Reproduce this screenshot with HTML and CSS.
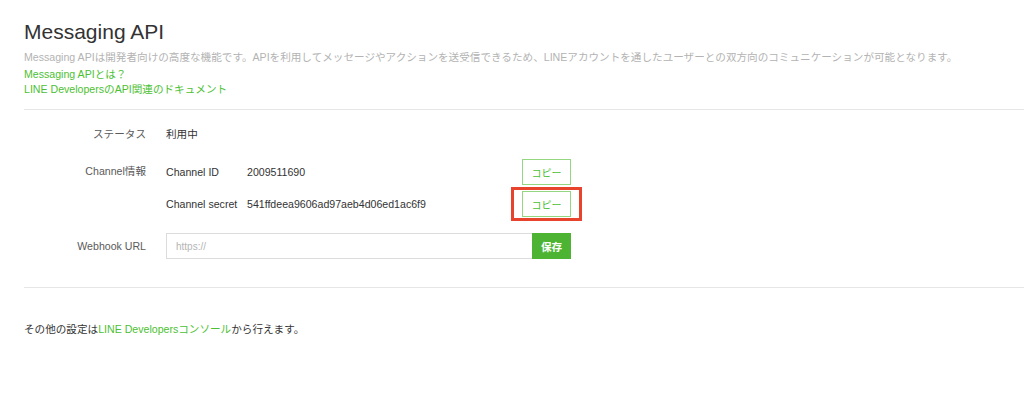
FILE: index.html
```html
<!DOCTYPE html>
<html lang="ja">
<head>
<meta charset="utf-8">
<title>Messaging API</title>
<link rel="stylesheet" href="styles.css">
</head>
<body>
<div class="page">
  <header class="head">
    <h1 class="title">Messaging API</h1>
    <p class="desc">Messaging APIは開発者向けの高度な機能です。APIを利用してメッセージやアクションを送受信できるため、LINEアカウントを通したユーザーとの双方向のコミュニケーションが可能となります。</p>
    <a class="link link-first" href="#">Messaging APIとは？</a>
    <a class="link" href="#">LINE DevelopersのAPI関連のドキュメント</a>
  </header>
  <hr class="divider">
  <section class="form">
    <div class="row row-status">
      <div class="label">ステータス</div>
      <div class="value">利用中</div>
    </div>
    <div class="row row-channel">
      <div class="label label-top">Channel情報</div>
      <div class="channel">
        <div class="ch-row">
          <span class="ch-key">Channel ID</span>
          <span class="ch-val">2009511690</span>
          <button class="copy">コピー</button>
        </div>
        <div class="ch-row">
          <span class="ch-key">Channel secret</span>
          <span class="ch-val">541ffdeea9606ad97aeb4d06ed1ac6f9</span>
          <span class="highlight"><button class="copy">コピー</button></span>
        </div>
      </div>
    </div>
    <div class="row row-webhook">
      <div class="label">Webhook URL</div>
      <div class="webhook">
        <input class="url" type="text" placeholder="https://">
        <button class="save">保存</button>
      </div>
    </div>
  </section>
  <hr class="divider divider-2">
  <p class="footer">その他の設定は<a class="link-inline" href="#">LINE Developersコンソール</a>から行えます。</p>
</div>
</body>
</html>
```

FILE: styles.css
```css
* { box-sizing: border-box; }
html, body { margin: 0; padding: 0; background: #fff; }
body {
  font-family: "Liberation Sans", "Noto Sans CJK JP", sans-serif;
  color: #333;
  font-size: 11px;
}
.page { padding: 18px 0 0 24px; }

.head { display: flex; flex-direction: column; align-items: flex-start; }
.title {
  margin: 0;
  font-size: 21px;
  font-weight: 400;
  line-height: 28px;
  color: #333;
}
.desc {
  margin: 4px 0 0;
  font-size: 10.6px;
  line-height: 15px;
  color: #b3b3b3;
  white-space: nowrap;
}
.link {
  font-size: 10.6px;
  line-height: 15px;
  color: #4cbf33;
  text-decoration: none;
}
.link-first { margin-top: 2px; }

.divider {
  margin: 12px 0 0;
  border: 0;
  border-top: 1px solid #e6e6e6;
  height: 0;
}

.form { padding-top: 11px; display: flex; flex-direction: column; }
.row {
  display: grid;
  grid-template-columns: 122px 1fr;
  column-gap: 20px;
  align-items: center;
}
.label {
  text-align: right;
  color: #5a5a5a;
  font-size: 10.6px;
}
.value { font-size: 10.6px; color: #333; }
.row-status { height: 25px; }
.row-channel { margin-top: 13px; align-items: start; }
.label-top { line-height: 25px; }
.channel { display: flex; flex-direction: column; gap: 6px; }
.ch-row {
  display: grid;
  grid-template-columns: 81px 275px 49px;
  align-items: center;
  height: 26px;
  font-size: 10.6px;
}
.ch-val { color: #333; }
.copy {
  width: 49px;
  height: 26px;
  padding: 0;
  background: #fff;
  border: 1px solid #95d681;
  color: #4cbf33;
  font-family: inherit;
  font-size: 10px;
  cursor: pointer;
}
.highlight { position: relative; display: block; width: 49px; height: 26px; }
.highlight .copy { display: block; }
.highlight::after {
  content: "";
  position: absolute;
  top: -4px; bottom: -4px; left: -11px; right: -11px;
  border: 3px solid #e8432d;
  pointer-events: none;
}

.row-webhook { margin-top: 16px; }
.webhook { display: flex; }
.url {
  width: 366px;
  height: 26px;
  border: 1px solid #dcdcdc;
  border-right: 0;
  padding: 0 9px;
  font-family: inherit;
  font-size: 10px;
  color: #333;
  outline: none;
}
.url::placeholder { color: #b5b5b5; }
.save {
  width: 39px;
  height: 26px;
  border: 0;
  background: #4cb432;
  color: #fff;
  font-family: inherit;
  font-size: 10.6px;
  font-weight: 700;
  padding: 0;
}

.divider-2 { margin-top: 28px; }
.footer {
  margin: 34px 0 0;
  font-size: 10.6px;
  line-height: 15px;
  color: #333;
}
.link-inline { color: #4cbf33; text-decoration: none; }
```
